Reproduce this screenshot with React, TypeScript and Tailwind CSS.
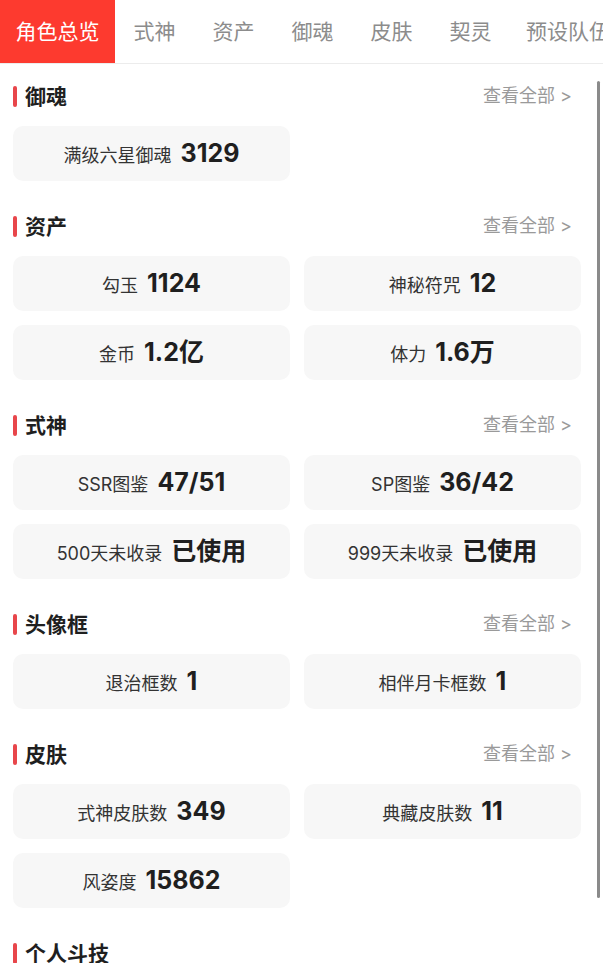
import React from 'react';

type Stat = { label: string; value: string };
type Section = { title: string; more: boolean; items: Stat[] };

const tabs = ['角色总览', '式神', '资产', '御魂', '皮肤', '契灵', '预设队伍'];

const sections: Section[] = [
  { title: '御魂', more: true, items: [{ label: '满级六星御魂', value: '3129' }] },
  {
    title: '资产',
    more: true,
    items: [
      { label: '勾玉', value: '1124' },
      { label: '神秘符咒', value: '12' },
      { label: '金币', value: '1.2亿' },
      { label: '体力', value: '1.6万' },
    ],
  },
  {
    title: '式神',
    more: true,
    items: [
      { label: 'SSR图鉴', value: '47/51' },
      { label: 'SP图鉴', value: '36/42' },
      { label: '500天未收录', value: '已使用' },
      { label: '999天未收录', value: '已使用' },
    ],
  },
  {
    title: '头像框',
    more: true,
    items: [
      { label: '退治框数', value: '1' },
      { label: '相伴月卡框数', value: '1' },
    ],
  },
  {
    title: '皮肤',
    more: true,
    items: [
      { label: '式神皮肤数', value: '349' },
      { label: '典藏皮肤数', value: '11' },
      { label: '风姿度', value: '15862' },
    ],
  },
  { title: '个人斗技', more: false, items: [] },
];

const SectionTitle: React.FC<{ title: string; more: boolean }> = ({ title, more }) => (
  <div className="flex items-center justify-between h-[30px] mb-[15px]">
    <div className="flex items-center gap-[8px]">
      <span className="w-[4px] h-[21px] rounded-[2px] bg-[#e8464b]" />
      <span className="text-[21px] font-bold text-[#1f1f1f] leading-none">{title}</span>
    </div>
    {more && (
      <span className="text-[18px] text-[#9a9a9a] leading-none mr-[9px]">查看全部 &gt;</span>
    )}
  </div>
);

export default function App() {
  return (
    <div className="relative w-[603px] h-[963px] overflow-hidden bg-white font-['Inter','Noto_Sans_CJK_SC',sans-serif]">
      <nav className="flex h-[64px] border-b border-[#ececec] whitespace-nowrap overflow-hidden">
        {tabs.map((t, i) => (
          <div
            key={t}
            className={
              i === 0
                ? 'shrink-0 w-[115px] flex items-center justify-center bg-[#fd3a2f] text-white text-[21px]'
                : i === tabs.length - 1
                ? 'shrink-0 pl-[16px] flex items-center text-[#8c8c8c] text-[21px]'
                : 'shrink-0 w-[79px] flex items-center justify-center text-[#8c8c8c] text-[21px]'
            }
          >
            {t}
          </div>
        ))}
      </nav>

      <main className="pl-[13px] pr-[22px] pt-[17px]">
        {sections.map((s) => (
          <section key={s.title} className="mb-[30px]">
            <SectionTitle title={s.title} more={s.more} />
            {s.items.length > 0 && (
              <div className="grid grid-cols-2 gap-[14px]">
                {s.items.map((it, idx) => (
                  <div
                    key={s.title + idx}
                    className="h-[55px] rounded-[10px] bg-[#f7f7f7] flex items-baseline justify-center pt-[15px]"
                  >
                    <span className="text-[18px] text-[#333333]">{it.label}</span>
                    <span className="ml-[9px] text-[25px] font-bold text-[#1f1f1f] leading-none">{it.value}</span>
                  </div>
                ))}
              </div>
            )}
          </section>
        ))}
      </main>

      <div className="absolute right-[3px] top-[81px] w-[3px] h-[817px] rounded-full bg-[#8a8a8a]" />
    </div>
  );
}
